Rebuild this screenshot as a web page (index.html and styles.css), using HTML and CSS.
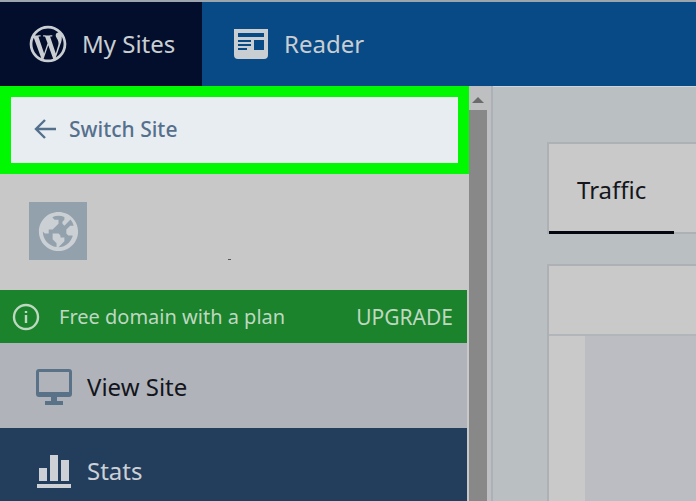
FILE: index.html
```html
<!DOCTYPE html>
<html lang="en">
<head>
<meta charset="utf-8">
<title>Stats</title>
<link rel="stylesheet" href="styles.css">
</head>
<body>
<header class="masterbar">
  <a class="masterbar-item is-active" href="#">
    <svg class="icon-logo" viewBox="0 0 24 24" aria-hidden="true"><path d="M12 2C6.486 2 2 6.486 2 12s4.486 10 10 10 10-4.486 10-10S17.514 2 12 2zM3.5 12c0-1.232.264-2.402.736-3.46L8.29 19.65C5.456 18.272 3.5 15.365 3.5 12zm8.5 8.5c-.834 0-1.64-.12-2.4-.345l2.55-7.41 2.613 7.157c.017.042.038.08.06.117-.884.31-1.833.48-2.823.48zm1.172-12.485c.512-.027.973-.08.973-.08.458-.055.404-.728-.054-.702 0 0-1.376.108-2.265.108-.835 0-2.24-.107-2.24-.107-.458-.026-.51.674-.053.7 0 0 .434.055.892.082l1.324 3.63-1.86 5.578-3.096-9.208c.512-.027.973-.08.973-.08.458-.055.403-.728-.055-.702 0 0-1.376.108-2.265.108-.16 0-.347-.003-.547-.01C6.418 5.025 9.03 3.5 12 3.5c2.213 0 4.228.846 5.74 2.232-.037-.002-.072-.007-.11-.007-.835 0-1.427.727-1.427 1.51 0 .7.404 1.292.835 1.993.323.566.7 1.293.7 2.344 0 .727-.28 1.572-.646 2.748l-.848 2.833-3.072-9.138zm3.1 11.332l2.597-7.506c.484-1.212.645-2.18.645-3.044 0-.313-.02-.603-.057-.874.664 1.21 1.042 2.6 1.042 4.078 0 3.136-1.7 5.874-4.227 7.347z"/></svg>
    <span>My Sites</span>
  </a>
  <a class="masterbar-item" href="#">
    <svg class="icon-reader" viewBox="0 0 34 30" aria-hidden="true"><path fill-rule="evenodd" d="M0 0h34v26a4 4 0 0 1-4 4H4a4 4 0 0 1-4-4zM4 4v4h26V4zM4 11v2h13v-2zM4 15v2h13v-2zM4 19v2h9v-2zM20 11v10h10V11z"/></svg>
    <span>Reader</span>
  </a>
</header>
<div class="layout">
  <nav class="sidebar">
    <div class="switch-frame">
      <button class="switch-site" type="button">
        <svg class="icon-arrow" viewBox="0 0 22 20" aria-hidden="true"><path d="M11 1 2 10l9 9M2 10h20"/></svg>
        <span>Switch Site</span>
      </button>
    </div>
    <div class="site">
      <div class="site-icon">
        <svg class="icon-globe" viewBox="0 0 24 24" aria-hidden="true"><path d="M12 2C6.477 2 2 6.477 2 12s4.477 10 10 10 10-4.477 10-10S17.523 2 12 2zm0 18l2-2 1-1v-2h-2v-1l-1-1H9v3l2 2v1.93c-3.94-.494-7-3.858-7-7.93l1 1h2v-2h2l3-3V6h-2L9 5v-.41C9.927 4.21 10.94 4 12 4s2.073.212 3 .59V6l-1 1v1l1 1 3.13-3.13c.752.897 1.304 1.964 1.606 3.13H18l-2 2v2l1 1h2l.286.286C18.03 18.06 15.24 20 12 20z"/></svg>
      </div>
      <span class="site-mark"></span>
    </div>
    <div class="notice">
      <svg class="icon-info" viewBox="0 0 28 28" aria-hidden="true"><circle cx="14" cy="14" r="12"/><path d="M14 12v8M14 8v2"/></svg>
      <span>Free domain with a plan</span>
      <a class="notice-action" href="#">UPGRADE</a>
    </div>
    <a class="menu-item" href="#">
      <svg class="icon-menu" viewBox="0 0 38 38" aria-hidden="true"><path fill-rule="evenodd" d="M4 1h30a3 3 0 0 1 3 3v22a3 3 0 0 1-3 3H22v4h6v4H10v-4h6v-4H4a3 3 0 0 1-3-3V4a3 3 0 0 1 3-3zM4 4v20h30V4z"/></svg>
      <span>View Site</span>
    </a>
    <a class="menu-item is-selected" href="#">
      <svg class="icon-menu" viewBox="0 0 38 38" aria-hidden="true"><path d="M4 16h8v13H4zM15 3h8v26h-8zM26 8h8v21h-8zM2 32h34v4H2z"/></svg>
      <span>Stats</span>
    </a>
  </nav>
  <div class="scrollbar" aria-hidden="true">
    <svg class="scroll-arrow" viewBox="0 0 12 6"><path d="M6 0l6 6H0z"/></svg>
    <div class="scroll-thumb"></div>
  </div>
  <main class="content">
    <div class="tabs"><a class="tab" href="#">Traffic</a></div>
    <section class="card">
      <div class="card-header"></div>
      <div class="card-body"><div class="chart"></div></div>
    </section>
  </main>
</div>
</body>
</html>
```
FILE: styles.css
```css
* { box-sizing: border-box; }
body {
  margin: 0;
  min-height: 100vh;
  display: flex;
  flex-direction: column;
  overflow: hidden;
  font-family: "Noto Sans", "Open Sans", sans-serif;
  font-size: 24px;
  line-height: 32px;
  background: #babfc1;
}
a { color: inherit; text-decoration: none; }
svg { display: block; flex: none; fill: currentColor; }

.masterbar {
  display: flex;
  height: 86px;
  border-top: 2px solid #9ca5ad;
  background: #084a86;
  color: #c9ced3;
}
.masterbar-item {
  display: flex;
  align-items: center;
  gap: 16px;
  padding: 0 32px;
}
.masterbar-item.is-active {
  gap: 12px;
  width: 202px;
  padding: 0 0 0 26px;
  background: #020e2c;
}
.icon-logo { width: 44px; height: 44px; }
.icon-reader { width: 34px; height: 30px; }

.layout { display: flex; flex: 1; }
.sidebar {
  display: flex;
  flex-direction: column;
  flex: none;
  width: 469px;
  background: #c8c8c9;
}
.switch-frame { padding: 11px; background: #00f900; }
.switch-site {
  display: flex;
  align-items: center;
  gap: 13px;
  width: 100%;
  height: 66px;
  padding: 0 23px 2px;
  border: 0;
  background: #e8edf1;
  color: #55708d;
  font: 500 21px/28px "Noto Sans", "Open Sans", sans-serif;
}
.icon-arrow { width: 22px; height: 20px; fill: none; stroke: currentColor; stroke-width: 2.4; }

.site {
  display: flex;
  align-items: center;
  height: 116px;
  padding: 0 29px 2px;
}
.site-icon {
  display: grid;
  place-items: center;
  width: 58px;
  height: 58px;
  background: #93a1ad;
  color: #cbd0d4;
}
.icon-globe { width: 47px; height: 47px; }
.site-mark {
  align-self: flex-end;
  width: 3px;
  height: 1px;
  margin: 0 0 28px 141px;
  background: #555;
}

.notice {
  display: flex;
  align-items: center;
  gap: 19px;
  height: 53px;
  margin-right: 2px;
  padding: 0 14px 0 12px;
  background: #1b832b;
  color: #bfd8c1;
  font-size: 20px;
}
.icon-info { width: 28px; height: 28px; fill: none; stroke: currentColor; stroke-width: 2.4; }
.notice-action { margin-left: auto; font-size: 21px; }

.menu-item {
  display: flex;
  align-items: center;
  gap: 14px;
  height: 85px;
  margin-right: 2px;
  padding: 2px 35px 0;
  background: #b0b4ba;
  color: #14151c;
}
.menu-item.is-selected { height: auto; flex: 1; padding-top: 12px; background: #233e5d; color: #cdd1d5; }
.icon-menu { width: 38px; height: 38px; }
.menu-item:not(.is-selected) .icon-menu { color: #5a7288; }

.scrollbar {
  display: flex;
  flex-direction: column;
  align-items: center;
  flex: none;
  width: 24px;
  padding-right: 4px;
  border-right: 2px solid #adb0b7;
  background: #bdbfc0;
}
.scroll-arrow { width: 12px; height: 6px; margin: 11px 0 7px; color: #6b6b6b; }
.scroll-thumb { flex: 1; width: 100%; background: #888; }

.content {
  flex: 1;
  display: flex;
  flex-direction: column;
  gap: 30px;
  padding: 55px 0 0 54px;
  border-top: 1px solid #ccd6dd;
}
.tabs {
  display: flex;
  height: 92px;
  border: 2px solid #adb1b5;
  border-right: 0;
  background: #c9c9c9;
}
.tab { display: flex; align-items: center; padding: 4px 28px 0; margin-bottom: -2px; border-bottom: 3px solid #04070f; color: #15161c; }
.card { flex: 1; display: flex; flex-direction: column; border: 2px solid #adb1b5; border-width: 2px 0 0 2px; background: #c9c9c9; }
.card-header { height: 70px; border-bottom: 2px solid #b2b5b9; }
.card-body { flex: 1; display: flex; padding-left: 36px; }
.chart { flex: 1; background: #bcbdc3; }
```
